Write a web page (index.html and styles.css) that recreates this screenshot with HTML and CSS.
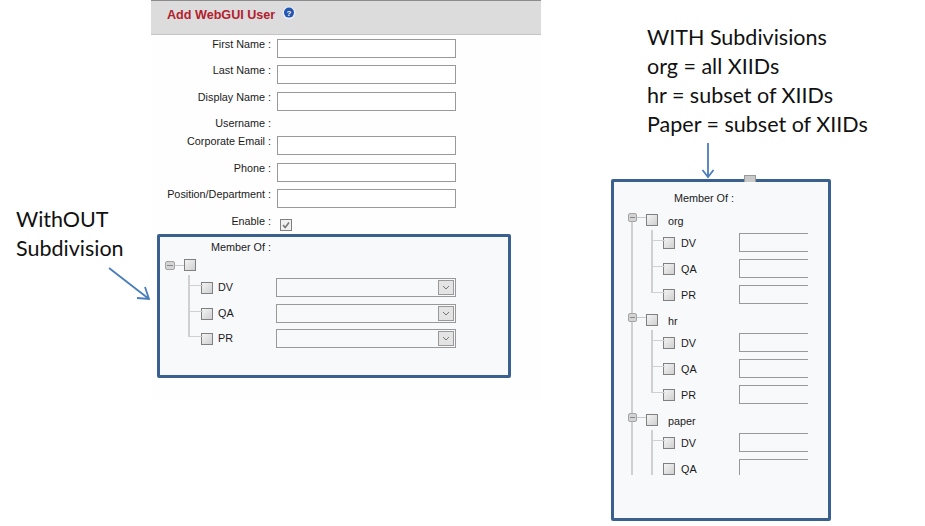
FILE: index.html
```html
<!DOCTYPE html>
<html lang="en">
<head>
<meta charset="utf-8">
<title>Add WebGUI User</title>
<link rel="stylesheet" href="styles.css">
</head>
<body>
<div class="slide">
  <aside class="left-note">
    <p class="note">WithOUT<br>Subdivision</p>
    <svg class="arrow-diag" width="46" height="36" viewBox="0 0 46 36"><path d="M1 1 L41 32 M29 31 L41 32 L37 20" fill="none" stroke="#4a7ebb" stroke-width="1.8"/></svg>
  </aside>

  <main class="form-col">
    <header class="form-head">
      <h1 class="form-title">Add WebGUI User</h1>
      <svg class="help" width="14" height="14" viewBox="0 0 14 14"><circle cx="7" cy="7" r="6.5" fill="#e6edf8"/><circle cx="7" cy="6.6" r="5" fill="#2456b0"/><text x="7" y="9.6" text-anchor="middle" class="help-q">?</text></svg>
    </header>
    <div class="fields">
      <label class="lbl">First Name :</label><span class="input"></span>
      <label class="lbl">Last Name :</label><span class="input"></span>
      <label class="lbl">Display Name :</label><span class="input"></span>
      <label class="lbl">Username :</label><span></span>
      <label class="lbl">Corporate Email :</label><span class="input"></span>
      <label class="lbl">Phone :</label><span class="input"></span>
      <label class="lbl">Position/Department :</label><span class="input"></span>
      <label class="lbl">Enable :</label>
      <span class="check enable"><svg width="10" height="10" viewBox="0 0 10 10"><path d="M2 5 L4.2 7.5 L8 2.5" fill="none" stroke="#777" stroke-width="1.6"/></svg></span>
    </div>

    <section class="box box-a">
      <div class="member-a lbl">Member Of :</div>
      <div class="root-a"><span class="toggle"></span><span class="tick-root"></span><span class="check"></span></div>
      <ul class="kids-a">
        <li class="kid-a"><span class="check"></span><span class="kid-name">DV</span><span class="select"><span class="select-btn"><svg width="8" height="5" viewBox="0 0 8 5"><path d="M1 1 L4 4 L7 1" fill="none" stroke="#777"/></svg></span></span></li>
        <li class="kid-a"><span class="check"></span><span class="kid-name">QA</span><span class="select"><span class="select-btn"><svg width="8" height="5" viewBox="0 0 8 5"><path d="M1 1 L4 4 L7 1" fill="none" stroke="#777"/></svg></span></span></li>
        <li class="kid-a"><span class="check"></span><span class="kid-name">PR</span><span class="select"><span class="select-btn"><svg width="8" height="5" viewBox="0 0 8 5"><path d="M1 1 L4 4 L7 1" fill="none" stroke="#777"/></svg></span></span></li>
      </ul>
    </section>
  </main>

  <aside class="right-col">
    <p class="note note-right">WITH Subdivisions<br>org = all XIIDs<br>hr = subset of XIIDs<br>Paper = subset of XIIDs</p>
    <svg class="arrow-down" width="14" height="36" viewBox="0 0 14 36"><path d="M7 0 L7 34 M1.5 27 L7 34 L12.5 27" fill="none" stroke="#4a7ebb" stroke-width="1.8"/></svg>
    <section class="box box-b">
      <span class="stray-check"></span>
      <div class="member-b lbl">Member Of :</div>
      <div class="tree">
        <div class="group">
          <div class="group-head"><span class="toggle"></span><span class="tick-root"></span><span class="check"></span><span class="group-name">org</span></div>
          <ul class="kids-b">
            <li class="kid-b"><span class="check"></span><span class="kid-name">DV</span><span class="open-input"></span></li>
            <li class="kid-b"><span class="check"></span><span class="kid-name">QA</span><span class="open-input"></span></li>
            <li class="kid-b"><span class="check"></span><span class="kid-name">PR</span><span class="open-input"></span></li>
          </ul>
        </div>
        <div class="group">
          <div class="group-head"><span class="toggle"></span><span class="tick-root"></span><span class="check"></span><span class="group-name">hr</span></div>
          <ul class="kids-b">
            <li class="kid-b"><span class="check"></span><span class="kid-name">DV</span><span class="open-input"></span></li>
            <li class="kid-b"><span class="check"></span><span class="kid-name">QA</span><span class="open-input"></span></li>
            <li class="kid-b"><span class="check"></span><span class="kid-name">PR</span><span class="open-input"></span></li>
          </ul>
        </div>
        <div class="group">
          <div class="group-head"><span class="toggle"></span><span class="tick-root"></span><span class="check"></span><span class="group-name">paper</span></div>
          <ul class="kids-b">
            <li class="kid-b"><span class="check"></span><span class="kid-name">DV</span><span class="open-input"></span></li>
            <li class="kid-b kid-cut"><span class="check"></span><span class="kid-name">QA</span><span class="open-input"></span></li>
          </ul>
        </div>
      </div>
    </section>
  </aside>
</div>
</body>
</html>
```
FILE: styles.css
```css
* { box-sizing: border-box; }
html, body { margin: 0; padding: 0; background: #fff; }
ul { list-style: none; margin: 0; padding: 0; }
p, h1 { margin: 0; }
.slide {
  width: 925px; height: 526px; overflow: hidden;
  display: flex; align-items: flex-start;
  font-family: "Liberation Sans", Arial, sans-serif; font-size: 10.8px; color: #1a1a1a;
}
.note { font-family: Lato, "Open Sans", sans-serif; font-size: 21.5px; line-height: 29px; color: #111; white-space: nowrap; }

.left-note { width: 151px; flex: none; padding: 205px 0 0 16px; }
.arrow-diag { display: block; margin: 4px 0 0 92px; }

.form-col { width: 390px; height: 400px; flex: none; background: #fefefe; }
.form-head {
  height: 35px; display: flex; align-items: flex-start; gap: 7px;
  padding: 6px 0 0 16px;
  background: #dcdcdc; border-top: 1px solid #8c8c8c; border-bottom: 1px solid #c4c4c4;
}
.form-title { font-size: 12.6px; font-weight: bold; line-height: 16px; color: #b3202e; }
.help { display: block; margin-top: -1px; }
.help-q { font: bold 8px "Liberation Sans", sans-serif; fill: #fff; }

.fields {
  display: grid; grid-template-columns: 120px 179px; column-gap: 6px;
  grid-template-rows: 26px 27px 26px 18px 27px 26px 27px 20px;
  padding-top: 2px; align-items: start;
}
.lbl { line-height: 14px; text-align: right; white-space: nowrap; }
.input { display: block; height: 19px; margin-top: 2px; background: #fff; border: 1px solid #999; }
.check {
  flex: none; display: block; width: 12px; height: 12px;
  border: 1px solid #808080; background: linear-gradient(135deg, #f4f4f4, #d0d0d0);
}
.enable { margin: 5px 0 0 3px; display: flex; align-items: center; justify-content: center; background: #f0f0f0; }

.box { background: #f8f9fb; border: 3px solid #3a6090; border-radius: 2px; }
.box-a { width: 354px; height: 144px; margin-left: 6px; padding: 3px 0 0 5px; }
.member-a { width: 106px; }
.root-a { display: flex; align-items: center; height: 14px; margin-top: 4px; }
.toggle { flex: none; width: 10px; height: 9px; border: 1px solid #a4a4a4; border-radius: 2px; background: #d4d4d4; position: relative; }
.toggle::after { content: ""; position: absolute; left: 1px; right: 1px; top: 3px; height: 1px; background: #888; }
.tick-root { flex: none; width: 9px; height: 1px; background: #c8c8c8; }
.kids-a { margin-top: 6px; }
.kid-a { position: relative; height: 25.5px; display: flex; align-items: flex-start; padding-left: 36px; }
.kid-a::before, .kid-b::before {
  content: ""; position: absolute; border-left: 2px solid #d0d0d0; border-bottom: 1px solid #d0d0d0;
}
.kid-a::before { left: 23px; top: -3px; width: 13px; height: 10px; }
.kid-a + .kid-a::before { top: -19px; height: 26px; }
.kid-a .check { margin-top: 4px; }
.kid-name { line-height: 14px; margin-top: 2px; }
.kid-a .kid-name { width: 58px; margin-left: 5px; }
.select { width: 180px; height: 19px; background: #f8f9fb; border: 1px solid #999; display: flex; justify-content: flex-end; align-items: center; padding-right: 1px; }
.select-btn { width: 16px; height: 15px; border: 1px solid #999; background: #e4e4e4; display: flex; align-items: center; justify-content: center; }

.right-col { flex: none; margin-left: 70px; width: 220px; }
.note-right { margin: 23px 0 0 36px; }
.arrow-down { display: block; margin: 4px 0 0 90px; }
.box-b { position: relative; width: 220px; height: 342px; padding: 9px 0 0 14px; }
.stray-check { position: absolute; left: 130px; top: -7px; width: 12px; height: 7px; background: #c9c9c9; border: 1px solid #999; border-bottom: 0; }
.member-b { width: 106px; }
.tree { height: 262px; width: 194px; margin-top: 8px; overflow: hidden; position: relative; }
.tree::before { content: ""; position: absolute; left: 3px; top: 6px; bottom: 0; width: 2px; background: #d0d0d0; }
.group { height: 100px; }
.group-head { display: flex; align-items: center; height: 14px; position: relative; }
.group-head .toggle, .group-head .tick-root { margin-bottom: 6px; }
.group-head .toggle { width: 9px; z-index: 1; }
.group-name { margin-left: 10px; line-height: 14px; margin-top: 2px; }
.kids-b { margin-top: 6px; }
.kid-b { position: relative; height: 26px; display: flex; align-items: flex-start; padding-left: 35px; }
.kid-b::before { left: 23px; top: -19px; width: 12px; height: 26px; }
.kid-b:first-child::before { top: -3px; height: 10px; }
.kid-b.kid-cut::before { height: 60px; }
.kid-b .check { margin-top: 4px; }
.kid-b .kid-name { width: 58px; margin-left: 6px; margin-top: 3px; margin-bottom: -1px; }
.open-input { width: 69px; height: 19px; border: 1px solid #999; border-right: 0; }
```
